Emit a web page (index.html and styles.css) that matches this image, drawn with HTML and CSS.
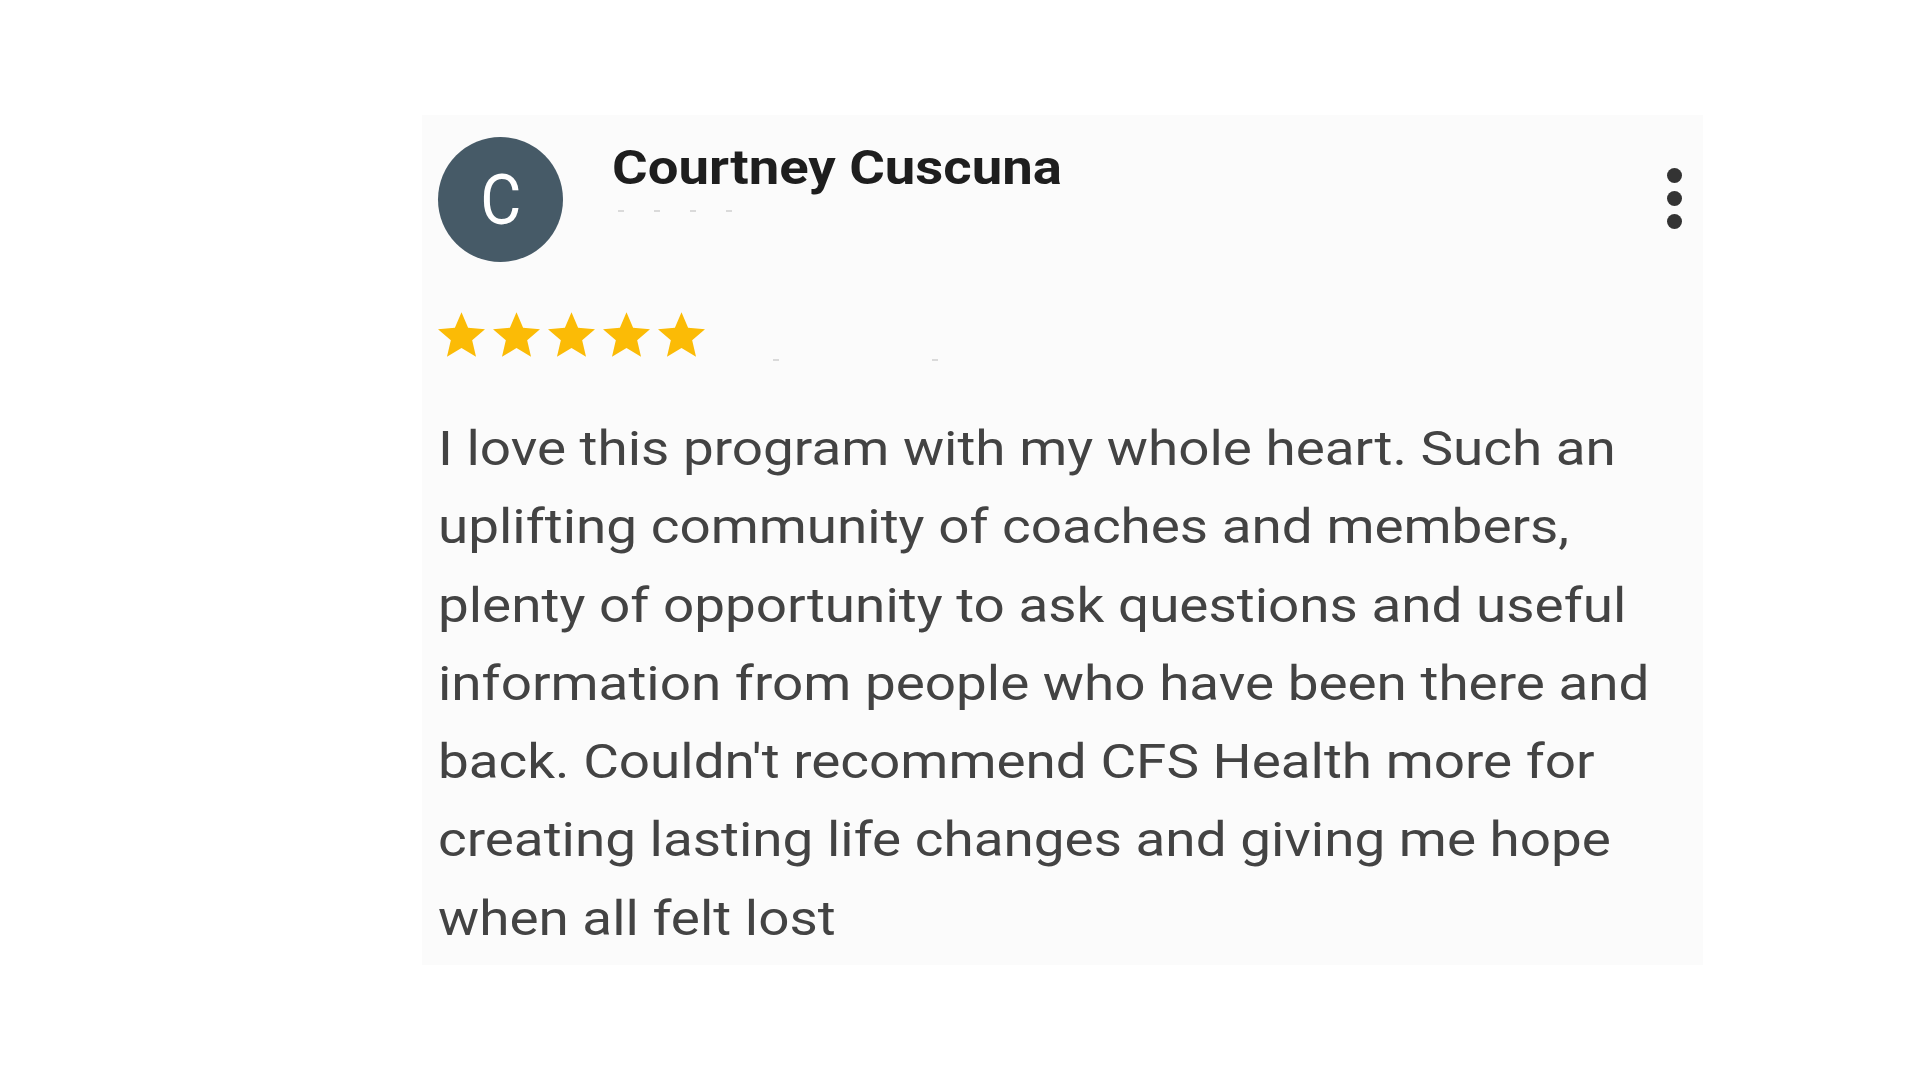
FILE: index.html
```html
<!DOCTYPE html>
<html lang="en">
<head>
<meta charset="utf-8">
<title>Review</title>
<link rel="stylesheet" href="styles.css">
</head>
<body>
<div class="card">
  <div class="header">
    <div class="avatar"><span class="avatar-letter">C</span></div>
    <div class="who">
      <div class="name">Courtney Cuscuna</div>
      <div class="meta"><i></i><i></i><i></i><i></i></div>
    </div>
    <div class="kebab"><span></span><span></span><span></span></div>
  </div>
  <div class="rating">
    <div class="stars">
      <svg class="star" viewBox="2 2 20 19"><path d="M12 17.27L18.18 21l-1.64-7.03L22 9.24l-7.19-.61L12 2 9.19 8.63 2 9.24l5.46 4.73L5.82 21z"/></svg>
      <svg class="star" viewBox="2 2 20 19"><path d="M12 17.27L18.18 21l-1.64-7.03L22 9.24l-7.19-.61L12 2 9.19 8.63 2 9.24l5.46 4.73L5.82 21z"/></svg>
      <svg class="star" viewBox="2 2 20 19"><path d="M12 17.27L18.18 21l-1.64-7.03L22 9.24l-7.19-.61L12 2 9.19 8.63 2 9.24l5.46 4.73L5.82 21z"/></svg>
      <svg class="star" viewBox="2 2 20 19"><path d="M12 17.27L18.18 21l-1.64-7.03L22 9.24l-7.19-.61L12 2 9.19 8.63 2 9.24l5.46 4.73L5.82 21z"/></svg>
      <svg class="star" viewBox="2 2 20 19"><path d="M12 17.27L18.18 21l-1.64-7.03L22 9.24l-7.19-.61L12 2 9.19 8.63 2 9.24l5.46 4.73L5.82 21z"/></svg>
    </div>
    <div class="date"><i></i><i></i></div>
  </div>
  <p class="text">I love this program with my whole heart. Such an<br>uplifting community of coaches and members,<br>plenty of opportunity to ask questions and useful<br>information from people who have been there and<br>back. Couldn't recommend CFS Health more for<br>creating lasting life changes and giving me hope<br>when all felt lost</p>
</div>
</body>
</html>
```
FILE: styles.css
```css
html, body {
  margin: 0;
  padding: 0;
  background: #ffffff;
}
body {
  width: 1920px;
  height: 1080px;
  overflow: hidden;
  font-family: Roboto, "Liberation Sans", sans-serif;
}
.card {
  box-sizing: border-box;
  margin: 115px 0 0 422px;
  width: 1281px;
  height: 850px;
  background: #fbfbfb;
  padding: 22px 0 0 16px;
}
.header {
  display: flex;
  align-items: flex-start;
  height: 125px;
}
.avatar {
  flex: none;
  width: 125px;
  height: 125px;
  border-radius: 50%;
  background: #465a67;
  display: flex;
  align-items: center;
  justify-content: center;
}
.avatar-letter {
  color: #ffffff;
  font-size: 70px;
  font-weight: 400;
  line-height: 1;
  transform: scaleX(0.9);
}
.who {
  margin-left: 49px;
  margin-top: 7px;
}
.name {
  font-size: 48px;
  font-weight: 700;
  line-height: 1;
  color: #1e1e1e;
  white-space: nowrap;
  transform: scaleX(1.135);
  transform-origin: left center;
}
.meta {
  display: flex;
  gap: 30px;
  margin-top: 18px;
  margin-left: 6px;
}
.meta i, .date i {
  display: block;
  width: 6px;
  height: 2px;
  background: #dadada;
}
.kebab {
  margin-left: auto;
  margin-right: 21px;
  margin-top: 31px;
  display: flex;
  flex-direction: column;
  gap: 8px;
}
.kebab span {
  display: block;
  width: 15px;
  height: 15px;
  border-radius: 50%;
  background: #333333;
}
.rating {
  display: flex;
  align-items: flex-end;
  margin-top: 50px;
}
.stars {
  display: flex;
  gap: 8px;
}
.star {
  display: block;
  width: 47px;
  height: 45px;
  fill: #fbbb06;
}
.date {
  display: flex;
  gap: 153px;
  margin-left: 68px;
  margin-bottom: -4px;
}
.text {
  margin: 53px 0 0 0;
  font-size: 49px;
  line-height: 78.3px;
  color: #434343;
  white-space: nowrap;
  transform: scaleX(1.119);
  transform-origin: left top;
}
```
